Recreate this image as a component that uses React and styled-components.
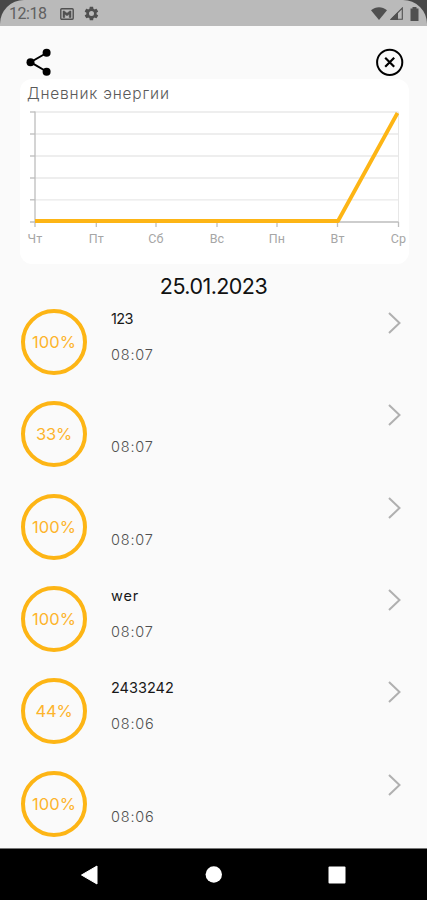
import React from "react";
import styled, { createGlobalStyle } from "styled-components";

const GlobalStyle = createGlobalStyle`
  * { box-sizing: border-box; }
  body { margin: 0; background: #fafafa; }
`;

const Screen = styled.main`
  width: 427px;
  height: 900px;
  display: flex;
  flex-direction: column;
  overflow: hidden;
  background: #fafafa;
  font-family: Inter, "Noto Sans", sans-serif;
`;

const StatusBackdrop = styled.div`
  flex: none;
  height: 26px;
  background: #484848;
`;

const StatusBar = styled.div`
  height: 26px;
  padding: 1px 8px 0 9px;
  display: flex;
  align-items: center;
  justify-content: space-between;
  background: #bababa;
  border-radius: 24px 24px 0 0;
  color: #505050;
`;

const StatusGroup = styled.div`
  display: flex;
  align-items: center;
  gap: ${(p) => p.$gap}px;
`;

const Clock = styled.span`
  width: 38px;
  margin-right: 3px;
  font: 400 16px/20px Roboto, sans-serif;
  letter-spacing: -0.45px;
  white-space: nowrap;
  color: #606060;
`;

const Icon = styled.svg`
  display: block;
  flex: none;
`;

const Header = styled.header`
  flex: none;
  height: 53px;
  padding: 22px 23px 0 26px;
  display: flex;
  justify-content: space-between;
`;

const IconButton = styled.button`
  height: 28px;
  padding: 0;
  border: 0;
  background: none;
`;

const Card = styled.section`
  flex: none;
  height: 185px;
  margin: 0 18px 0 20px;
  border-radius: 12px;
  background: #fff;
`;

const CardTitle = styled.h1`
  margin: 0;
  padding: 5px 0 0 7px;
  height: 26px;
  font-size: 15.5px;
  line-height: 20px;
  font-weight: 300;
  letter-spacing: 0.8px;
  color: #5a5a5a;
`;

const DateHeading = styled.h2`
  flex: none;
  height: 45px;
  margin: 0;
  padding-top: 7px;
  text-align: center;
  font-size: 21.5px;
  line-height: 30px;
  font-weight: 400;
  letter-spacing: -0.55px;
  color: #111;
`;

const List = styled.div`
  flex: 1;
  min-height: 0;
  overflow: hidden;
`;

const Row = styled.article`
  height: 92.35px;
  padding: 0 26px 0 21px;
  display: flex;
  align-items: flex-start;
`;

const Ring = styled.div`
  width: 66px;
  height: 66px;
  border: 4px solid #fdb515;
  border-radius: 50%;
  display: flex;
  align-items: center;
  justify-content: center;
  font-size: 16.5px;
  letter-spacing: ${(p) => (p.$wide ? "-0.15px" : "0.1px")};
  color: #fdb42c;
`;

const Details = styled.div`
  flex: 1;
  padding-left: 24px;
`;

const Name = styled.div`
  height: 36px;
  font-size: 14.5px;
  line-height: 19px;
  letter-spacing: ${(p) => p.$spacing}px;
  color: #181818;
`;

const Time = styled.div`
  font-size: 14.5px;
  line-height: 19px;
  font-weight: 300;
  letter-spacing: 0.8px;
  color: #505050;
`;

const ChevronBox = styled.div`
  padding-top: 3px;
`;

const NavBar = styled.nav`
  flex: none;
  height: 52px;
  padding: 0 81px 0 80px;
  border-top: 1px solid #777;
  display: flex;
  align-items: center;
  justify-content: space-between;
  background: #000;
`;

const days = ["Чт", "Пт", "Сб", "Вс", "Пн", "Вт", "Ср"];
const dayX = [15, 76.3, 136, 197, 257, 317.5, 378.5];
const gridY = [7, 29, 51, 73, 94.8];

const entries = [
  { value: 100, name: "123", time: "08:07", spacing: -0.6 },
  { value: 33, name: "", time: "08:07" },
  { value: 100, name: "", time: "08:07" },
  { value: 100, name: "wer", time: "08:07", spacing: 0.9 },
  { value: 44, name: "2433242", time: "08:06", spacing: 0 },
  { value: 100, name: "", time: "08:06" },
];

function EnergyChart() {
  return (
    <Icon width="389" height="145" viewBox="0 0 389 145">
      {gridY.map((y) => (
        <g key={y}>
          <path d={`M15 ${y}H378.5`} stroke="#e9e9e9" strokeWidth="1.3" />
          <path d={`M10 ${y}H15`} stroke="#bdbdbd" strokeWidth="1.3" />
        </g>
      ))}
      <path d="M378.5 7V117" stroke="#e7e7e7" />
      <path d="M15 6.5V117M10 117H378.5" stroke="#bdbdbd" strokeWidth="1.3" fill="none" />
      {dayX.map((x, i) => (
        <g key={days[i]}>
          <path d={`M${x} 117V122`} stroke="#bdbdbd" strokeWidth="1.3" />
          <text
            x={x}
            y="137.5"
            textAnchor="middle"
            fontFamily="Roboto, sans-serif"
            fontSize="12.5"
            letterSpacing="0.2"
            fill="#a6a6a6"
          >
            {days[i]}
          </text>
        </g>
      ))}
      <path d="M15 116H318L377.5 8" fill="none" stroke="#fdb515" strokeWidth="3.8" strokeLinejoin="round" />
    </Icon>
  );
}

function MailIcon() {
  return (
    <Icon width="14" height="12" viewBox="0 0 14 12">
      <rect x=".8" y=".8" width="12.4" height="10.4" rx="1" fill="none" stroke="currentColor" strokeWidth="1.4" />
      <path d="M3 3h1.2L7 5.2 9.8 3H11v6.5H9.2V6.2L7 7.8 4.8 6.2v3.3H3z" fill="currentColor" stroke="currentColor" strokeWidth=".5" />
    </Icon>
  );
}

function GearIcon() {
  return (
    <Icon width="15" height="15" viewBox="1 1 22 22">
      <path
        fill="currentColor"
        fillRule="evenodd"
        d="M19.4 13c0-.3.1-.6.1-1s0-.7-.1-1l2.1-1.6c.2-.2.2-.4.1-.6l-2-3.5c-.1-.2-.4-.3-.6-.2l-2.5 1c-.5-.4-1.1-.7-1.7-1l-.4-2.6c0-.3-.2-.5-.5-.5h-4c-.2 0-.5.2-.5.4L9 5.1c-.6.2-1.2.6-1.7 1L4.8 5c-.2-.1-.5 0-.6.2l-2 3.5c-.1.2-.1.5.1.6L4.5 11a8 8 0 0 0 0 2l-2.2 1.6c-.2.2-.2.4-.1.6l2 3.5c.1.2.4.3.6.2l2.5-1c.5.4 1.1.8 1.7 1l.4 2.7c0 .2.3.4.5.4h4c.3 0 .5-.2.5-.4l.4-2.7c.6-.2 1.2-.6 1.7-1l2.5 1c.2.1.5 0 .6-.2l2-3.5c.1-.2.1-.5-.1-.6zM12 15.7a3.7 3.7 0 1 1 0-7.4 3.7 3.7 0 0 1 0 7.4z"
      />
    </Icon>
  );
}

export default function App() {
  return (
    <Screen>
      <GlobalStyle />
      <StatusBackdrop>
        <StatusBar>
          <StatusGroup $gap={10}>
            <Clock>12:18</Clock>
            <MailIcon />
            <GearIcon />
          </StatusGroup>
          <StatusGroup $gap={3}>
            <Icon width="16" height="13" viewBox="0 0 16 13">
              <path d="M8 13 0 3.2C4.8-.7 11.2-.7 16 3.2z" fill="currentColor" />
            </Icon>
            <Icon width="13" height="13" viewBox="0 0 13 13">
              <path d="M12.3 1v11.3H1z" fill="none" stroke="currentColor" strokeWidth="1.1" />
              <path d="M8 5v8H0z" fill="currentColor" />
            </Icon>
            <Icon width="13" height="14" viewBox="0 0 13 14">
              <path d="M6.5 0h4v1.5h2V14h-8V1.5h2z" fill="currentColor" />
            </Icon>
          </StatusGroup>
        </StatusBar>
      </StatusBackdrop>
      <Header>
        <IconButton aria-label="Share">
          <Icon width="26" height="28" viewBox="0 0 26 28">
            <path d="M20.5 5 4.5 14.2l16 9.3" fill="none" stroke="#000" strokeWidth="2" />
            <circle cx="20.6" cy="4.8" r="4" />
            <circle cx="4.5" cy="14.2" r="4" />
            <circle cx="20.6" cy="23.7" r="4" />
          </Icon>
        </IconButton>
        <IconButton aria-label="Close">
          <Icon width="28" height="28" viewBox="0 0 28 28">
            <circle cx="13.7" cy="14.3" r="12.6" fill="none" stroke="#000" strokeWidth="2" />
            <path d="m9.2 9.8 9 9m0-9-9 9" stroke="#000" strokeWidth="2.2" />
          </Icon>
        </IconButton>
      </Header>
      <Card>
        <CardTitle>Дневник энергии</CardTitle>
        <EnergyChart />
      </Card>
      <DateHeading>25.01.2023</DateHeading>
      <List>
        {entries.map((entry, i) => (
          <Row key={i}>
            <Ring $wide={entry.value < 100}>{entry.value}%</Ring>
            <Details>
              <Name $spacing={entry.spacing ?? 0}>{entry.name}</Name>
              <Time>{entry.time}</Time>
            </Details>
            <ChevronBox>
              <Icon width="13" height="22" viewBox="0 0 13 22">
                <path d="m1 1 10.5 10L1 21" fill="none" stroke="#b0b0b0" strokeWidth="2" />
              </Icon>
            </ChevronBox>
          </Row>
        ))}
      </List>
      <NavBar>
        <Icon width="18" height="20" viewBox="0 0 18 20">
          <path d="M1.5 10 17 1v18z" fill="#fff" stroke="#fff" strokeLinejoin="round" />
        </Icon>
        <Icon width="17" height="17" viewBox="0 0 17 17">
          <circle cx="8.8" cy="8.5" r="8.2" fill="#fff" />
        </Icon>
        <Icon width="18" height="18" viewBox="0 0 18 18">
          <rect x=".5" y=".5" width="17" height="17" rx="1" fill="#fff" />
        </Icon>
      </NavBar>
    </Screen>
  );
}
